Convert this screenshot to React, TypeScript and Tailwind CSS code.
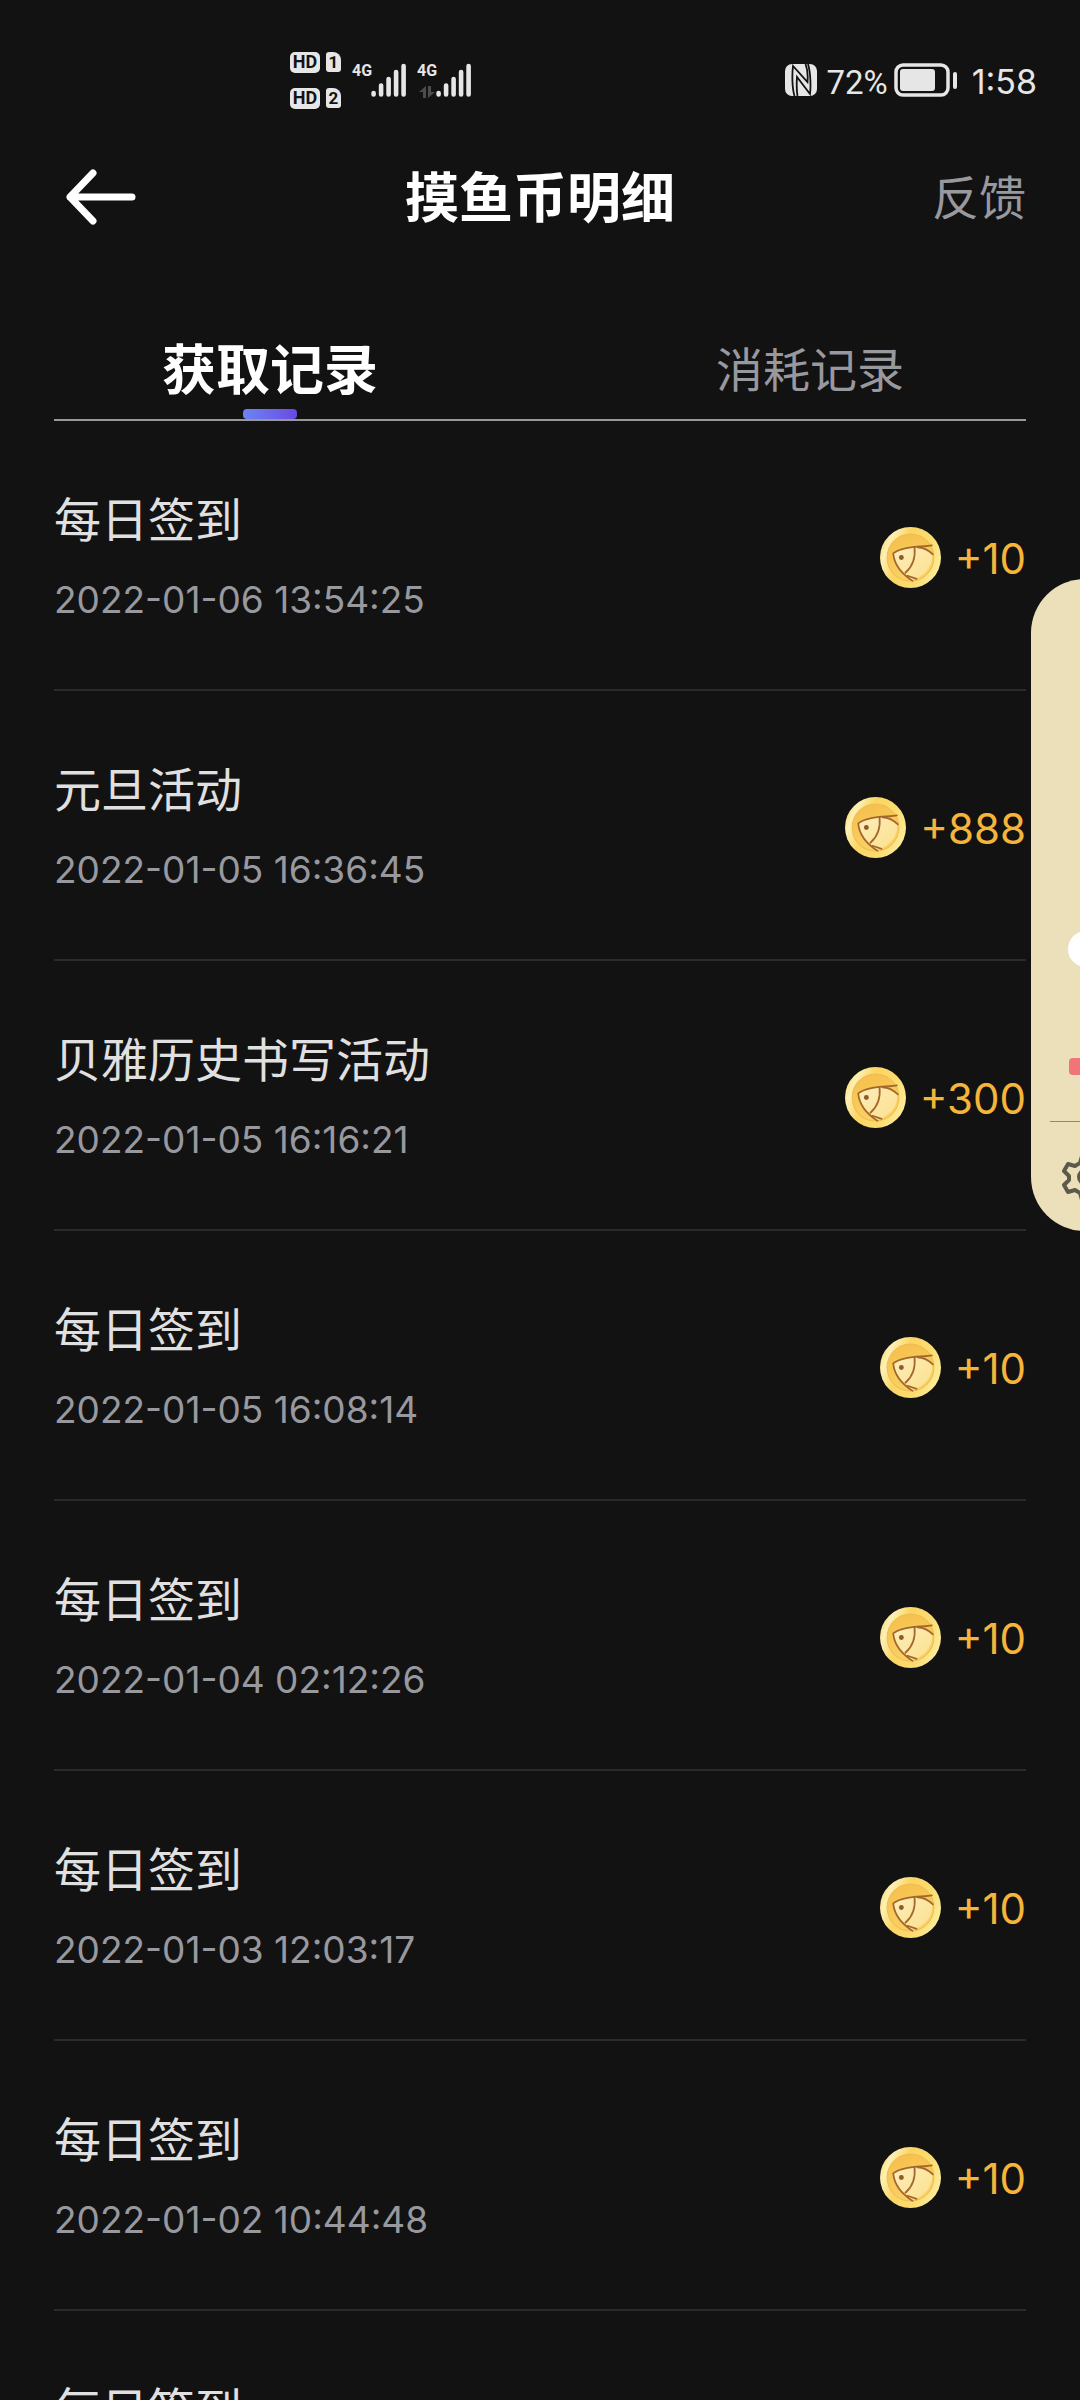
import React from "react";

type RecordItem = { title: string; time: string; amount: string };

const records: RecordItem[] = [
  { title: "每日签到", time: "2022-01-06 13:54:25", amount: "+10" },
  { title: "元旦活动", time: "2022-01-05 16:36:45", amount: "+888" },
  { title: "贝雅历史书写活动", time: "2022-01-05 16:16:21", amount: "+300" },
  { title: "每日签到", time: "2022-01-05 16:08:14", amount: "+10" },
  { title: "每日签到", time: "2022-01-04 02:12:26", amount: "+10" },
  { title: "每日签到", time: "2022-01-03 12:03:17", amount: "+10" },
  { title: "每日签到", time: "2022-01-02 10:44:48", amount: "+10" },
  { title: "每日签到", time: "2022-01-01 09:20:31", amount: "+10" },
];

function SimBadge({ slot }: { slot: string }) {
  return (
    <div className="flex h-[21px] items-center gap-[6px] font-['Roboto'] font-bold text-[#121212]">
      <span className="flex h-[21px] w-[30px] items-center justify-center rounded-[5px] bg-[#e6e6e6] text-[18px] leading-none">
        HD
      </span>
      <span className="flex h-5 w-[15px] items-center justify-center rounded-[3px] rounded-tr-[8px] bg-[#e6e6e6] text-[17px] leading-none">
        {slot}
      </span>
    </div>
  );
}

function Signal({ arrows }: { arrows?: boolean }) {
  return (
    <div className="flex h-9 items-stretch">
      <div className="flex w-[18px] flex-col items-center justify-between">
        <span className="font-['Roboto'] text-[16px] font-bold leading-[18px] text-[#e6e6e6]">4G</span>
        {arrows && (
          <svg viewBox="0 0 16 12" className="h-3 w-4" fill="#4c4c4c" aria-hidden="true">
            <path d="M7 0v12H4V6H0z" />
            <path d="M9 12V0h3v6h4z" />
          </svg>
        )}
      </div>
      <svg viewBox="0 0 36 36" className="h-9 w-9" stroke="#e6e6e6" strokeWidth="4.6" strokeLinecap="round" aria-hidden="true">
        <path d="M2.6 31v1.5M10.1 23.5v9M17.6 17v15.5M25.1 10v22.5M32.6 4v28.5" />
      </svg>
    </div>
  );
}

function NfcIcon() {
  return (
    <svg viewBox="0 0 32 32" className="size-8" aria-hidden="true">
      <rect width="32" height="32" rx="7" fill="#e6e6e6" />
      <path
        d="M9.500 32C7 24 7 10 8 2L22.500 18C23 12 22.500 5 20.500 0M12.500 32C11.500 26 11.500 20 12 13L25 30C26 22 25.500 8 23 0"
        fill="none"
        stroke="#121212"
        strokeWidth="1.800"
      />
    </svg>
  );
}

function StatusBar() {
  return (
    <div className="flex h-[120px] items-center justify-between pt-10 pr-[43px] pl-[290px]">
      <div className="flex items-center gap-3">
        <div className="flex flex-col gap-[15px]">
          <SimBadge slot="1" />
          <SimBadge slot="2" />
        </div>
        <div className="flex gap-[11px]">
          <Signal />
          <Signal arrows />
        </div>
      </div>
      <div className="flex items-center text-[34px] leading-none text-[#e6e6e6]">
        <NfcIcon />
        <span className="ml-[9px] pt-1 font-['Roboto'] text-[33px]">72%</span>
        <svg viewBox="0 0 64 34" className="ml-[6px] h-[34px] w-16" aria-hidden="true">
          <rect x="2" y="2" width="52" height="30" rx="7" fill="none" stroke="#e6e6e6" strokeWidth="3.500" />
          <rect x="6" y="6" width="35" height="22" rx="3" fill="#e6e6e6" />
          <rect x="59" y="9" width="4" height="17" rx="2" fill="#e6e6e6" />
        </svg>
        <span className="ml-[14px] pt-1 font-['Inter']">1:58</span>
      </div>
    </div>
  );
}

function Coin() {
  return (
    <svg viewBox="0 0 60 60" className="size-[61px]" aria-hidden="true">
      <defs>
        <linearGradient id="coinRim" x1="0" y1="0.300" x2="1" y2="0.700">
          <stop offset="0" stopColor="#fbe07a" />
          <stop offset="0.120" stopColor="#fdf0b4" />
          <stop offset="0.350" stopColor="#fbd562" />
          <stop offset="0.700" stopColor="#fbdc70" />
          <stop offset="1" stopColor="#fdeea0" />
        </linearGradient>
        <linearGradient id="coinFace" x1="0.300" y1="0" x2="0.700" y2="1">
          <stop offset="0" stopColor="#f6c04c" />
          <stop offset="1" stopColor="#fad469" />
        </linearGradient>
        <linearGradient id="coinFish" x1="0" y1="0" x2="1" y2="1">
          <stop offset="0" stopColor="#fdedbb" />
          <stop offset="1" stopColor="#fbe08c" />
        </linearGradient>
      </defs>
      <circle cx="30" cy="30" r="30" fill="url(#coinRim)" />
      <circle cx="30" cy="30" r="23" fill="url(#coinFace)" stroke="#efbd52" strokeWidth="1" />
      <path d="M13 26C20 21 30 20 38 20L51 26C53 36 46 48 31 52C22 46 14 37 13 26Z" fill="url(#coinFish)" />
      <g fill="none" stroke="#a3672c" strokeWidth="1.700" strokeLinecap="round">
        <path d="M51 18C42 20 23 18 13 26C14 37 21 46 32 53" />
        <path d="M34 20C35 30 33 38 25 45" />
        <path d="M37 20C43 20 48 23 52 27" />
        <path d="M27 48L36 51" />
      </g>
      <circle cx="21" cy="30" r="2.400" fill="#8f5a26" />
    </svg>
  );
}

function Row({ item }: { item: RecordItem }) {
  return (
    <li className="flex h-[270px] items-center justify-between border-b-2 border-[#2a2a2a] pt-1">
      <div className="flex flex-col gap-5">
        <h2 className="text-[47px] leading-[66px] text-[#e0e0e0]">{item.title}</h2>
        <time className="text-[37px] leading-[54px] text-[#98989f]">{item.time}</time>
      </div>
      <div className="flex items-center gap-[14px]">
        <Coin />
        <span className="pt-1 text-[42px] leading-[60px] text-[#f5b53a]">{item.amount}</span>
      </div>
    </li>
  );
}

function SidePanel() {
  return (
    <aside className="absolute top-[579px] right-0 h-[652px] w-[49px] overflow-hidden" aria-label="侧边栏">
      <div className="flex h-full w-[120px] flex-col rounded-[54px] bg-[#ebe0b9] pt-[352px]">
        <span className="ml-[37px] size-9 rounded-full bg-white" />
        <span className="mt-[91px] ml-[38px] h-[17px] w-11 rounded-[4px] bg-[#f07478]" />
        <span className="mt-[46px] ml-[19px] h-px w-[82px] bg-[#918b75]" />
        <svg viewBox="0 0 48 48" className="mt-[31px] ml-[31px] size-12" fill="none" stroke="#5e5a4b" strokeWidth="4" strokeLinejoin="round" aria-hidden="true">
          <path d="M20 3h8l2 7 5 3 7-2 4 7-5 5v4l5 5-4 7-7-2-5 3-2 7h-8l-2-7-5-3-7 2-4-7 5-5v-4l-5-5 4-7 7 2 5-3z" />
          <circle cx="24" cy="24" r="7" />
        </svg>
      </div>
    </aside>
  );
}

export default function App() {
  return (
    <div className="relative h-screen overflow-hidden bg-[#121212] font-['Inter','Noto_Sans_CJK_SC',sans-serif]">
      <StatusBar />
      <header className="grid h-[154px] grid-cols-[1fr_auto_1fr] items-center px-[54px]">
        <button type="button" aria-label="返回" className="ml-[11px] w-[72px]">
          <svg viewBox="0 0 72 56" className="h-14 w-[72px]" fill="none" stroke="#fff" strokeWidth="7" strokeLinecap="round" strokeLinejoin="round" aria-hidden="true">
            <path d="M67 28H5M28 4L5 28L28 52" />
          </svg>
        </button>
        <h1 className="pt-[3px] text-[54px] font-bold leading-[76px] text-white">摸鱼币明细</h1>
        <button type="button" className="justify-self-end pt-[2px] text-[47px] leading-[66px] text-[#98989f]">
          反馈
        </button>
      </header>
      <div role="tablist" className="mt-[46px] grid h-[99px] grid-cols-2">
        <button type="button" role="tab" aria-selected="true" className="flex flex-col items-center justify-end text-[54px] font-bold leading-[76px] text-white">
          获取记录
          <span className="h-[10px] w-[54px] rounded-[4px] bg-linear-to-r from-[#6b84f2] to-[#6a48e2]" />
        </button>
        <button type="button" role="tab" aria-selected="false" className="flex flex-col items-center justify-end pb-4 text-[47px] leading-[66px] text-[#98989f]">
          消耗记录
        </button>
      </div>
      <main className="mx-[54px] border-t-2 border-[#98989c]">
        <ul>
          {records.map((item) => (
            <Row key={item.time} item={item} />
          ))}
        </ul>
      </main>
      <SidePanel />
    </div>
  );
}
